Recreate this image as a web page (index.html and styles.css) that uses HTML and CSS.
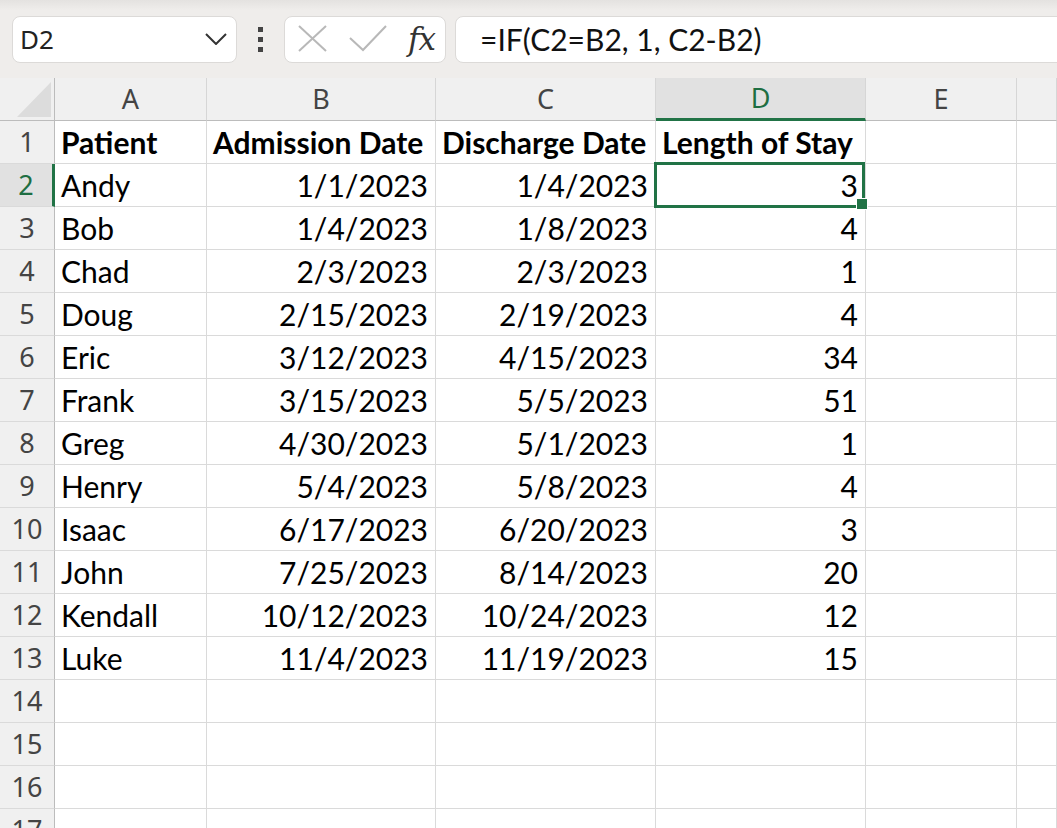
FILE: index.html
```html
<!DOCTYPE html>
<html lang="en">
<head>
    <meta charset="UTF-8">
    <title>Length of Stay</title>
    <link rel="stylesheet" href="styles.css">
</head>
<body>
    <!-- formula bar -->
    <div class="toolbar">
        <div class="name-box">
            <span>D2</span>
            <svg class="chevron" width="22" height="12" viewBox="0 0 22 12">
                <polyline points="1,1 11,11 21,1" fill="none" stroke="#333" stroke-width="2"/>
            </svg>
        </div>
        <div class="more">
            <i></i><i></i><i></i>
        </div>
        <div class="fx-box">
            <svg width="30" height="28" viewBox="0 0 30 28">
                <line x1="1" y1="1" x2="28" y2="26" stroke="#b8b8b8" stroke-width="2"/>
                <line x1="28" y1="1" x2="1" y2="26" stroke="#b8b8b8" stroke-width="2"/>
            </svg>
            <svg width="38" height="28" viewBox="0 0 38 28">
                <polyline points="1,13 14,25 37,1" fill="none" stroke="#b8b8b8" stroke-width="2"/>
            </svg>
            <span class="fx">fx</span>
        </div>
        <div class="formula">=IF(C2=B2, 1, C2-B2)</div>
    </div>

    <!-- grid -->
    <div class="sheet" id="sheet"></div>

    <script>
        const cols = ['A', 'B', 'C', 'D', 'E', ''];
        const rows = [
            ['Patient', 'Admission Date', 'Discharge Date', 'Length of Stay'],
            ['Andy', '1/1/2023', '1/4/2023', '3'],
            ['Bob', '1/4/2023', '1/8/2023', '4'],
            ['Chad', '2/3/2023', '2/3/2023', '1'],
            ['Doug', '2/15/2023', '2/19/2023', '4'],
            ['Eric', '3/12/2023', '4/15/2023', '34'],
            ['Frank', '3/15/2023', '5/5/2023', '51'],
            ['Greg', '4/30/2023', '5/1/2023', '1'],
            ['Henry', '5/4/2023', '5/8/2023', '4'],
            ['Isaac', '6/17/2023', '6/20/2023', '3'],
            ['John', '7/25/2023', '8/14/2023', '20'],
            ['Kendall', '10/12/2023', '10/24/2023', '12'],
            ['Luke', '11/4/2023', '11/19/2023', '15']
        ];
        const totalRows = 17;

        function cell(cls, text) {
            const el = document.createElement('div');
            el.className = cls;
            el.textContent = text || '';
            return el;
        }

        const sheet = document.getElementById('sheet');
        sheet.appendChild(cell('corner'));
        cols.forEach(c => {
            sheet.appendChild(cell('col-head' + (c === 'D' ? ' active' : ''), c));
        });

        for (let r = 1; r <= totalRows; r++) {
            sheet.appendChild(cell('row-head' + (r === 2 ? ' active' : ''), r));
            const data = rows[r - 1] || [];
            for (let c = 0; c < cols.length; c++) {
                let cls = 'cell';
                if (r === 1 && c < 4) cls += ' bold';
                else if (c > 0 && c < 4) cls += ' num';
                if (r === 2 && c === 3) cls += ' selected';
                sheet.appendChild(cell(cls, data[c]));
            }
        }
    </script>
</body>
</html>
```

FILE: styles.css
```css
* {
    margin: 0;
    padding: 0;
    box-sizing: border-box;
}

body {
    width: 1057px;
    height: 828px;
    overflow: hidden;
    background: #fff;
}

/* formula bar */
.toolbar {
    height: 78px;
    display: flex;
    align-items: center;
    padding-left: 12px;
    background: linear-gradient(#e4e2e0 0, #efedeb 10px);
    font-family: "Noto Sans", sans-serif;
    color: #222;
}

.name-box,
.fx-box,
.formula {
    height: 47px;
    background: #fff;
    border: 1px solid #dcdad8;
    border-radius: 8px;
    display: flex;
    align-items: center;
}

.name-box {
    width: 225px;
    padding: 0 9px 0 7px;
    justify-content: space-between;
    font-size: 26px;
}

.more {
    width: 47px;
    display: flex;
    flex-direction: column;
    align-items: center;
    gap: 5px;
}

.more i {
    width: 5px;
    height: 5px;
    background: #444;
}

.fx-box {
    width: 162px;
    padding: 0 10px 0 13px;
    justify-content: space-between;
}

.fx {
    font-family: "DejaVu Serif", serif;
    font-style: italic;
    font-size: 31px;
    letter-spacing: -1px;
    color: #333;
    line-height: 1;
}

.formula {
    flex: 1;
    margin-left: 9px;
    margin-right: -20px;
    padding-left: 24px;
    font-family: Lato, sans-serif;
    font-size: 30px;
    color: #111;
}

/* grid */
.sheet {
    display: grid;
    grid-template-columns: 55px 152px 229px 220px 210px 151px 1fr;
    grid-auto-rows: 43px;
}

.corner,
.col-head,
.row-head {
    background: #f0f0f0;
    font-family: "Noto Sans", sans-serif;
    font-size: 27px;
    color: #444;
    text-align: center;
    line-height: 42px;
}

.corner {
    position: relative;
    border-right: 1px solid #bcbcbc;
    border-bottom: 1px solid #bcbcbc;
}

.corner::after {
    content: "";
    position: absolute;
    left: 17px;
    top: 4px;
    width: 34px;
    height: 35px;
    background: #dcdcdc;
    clip-path: polygon(100% 0, 100% 100%, 0 100%);
}

.col-head {
    border-right: 1px solid #d6d6d6;
    border-bottom: 1px solid #bcbcbc;
}

.col-head.active {
    background: #e1e1e1;
    color: #1e6e42;
    border-bottom: 3px solid #217346;
    line-height: 40px;
}

.row-head {
    border-right: 1px solid #bcbcbc;
    border-bottom: 1px solid #dadada;
}

.row-head.active {
    background: #e1e1e1;
    color: #1e6e42;
    border-right: 3px solid #217346;
}

.cell {
    position: relative;
    border-right: 1px solid #dadada;
    border-bottom: 1px solid #dadada;
    padding: 0 6px;
    font-family: Lato, sans-serif;
    font-size: 30px;
    line-height: 42px;
    color: #000;
    white-space: nowrap;
    overflow: hidden;
}

.cell.bold {
    font-weight: 700;
}

.cell.num {
    text-align: right;
    padding-right: 7px;
}

/* active cell */
.cell.selected {
    overflow: visible;
    z-index: 2;
}

.cell.selected::before {
    content: "";
    position: absolute;
    left: -2px;
    top: -2px;
    right: 0;
    bottom: -2px;
    border: 3px solid #217346;
}

.cell.selected::after {
    content: "";
    position: absolute;
    right: -3px;
    bottom: -4px;
    width: 10px;
    height: 10px;
    background: #217346;
    border: 1px solid #fff;
}
```
